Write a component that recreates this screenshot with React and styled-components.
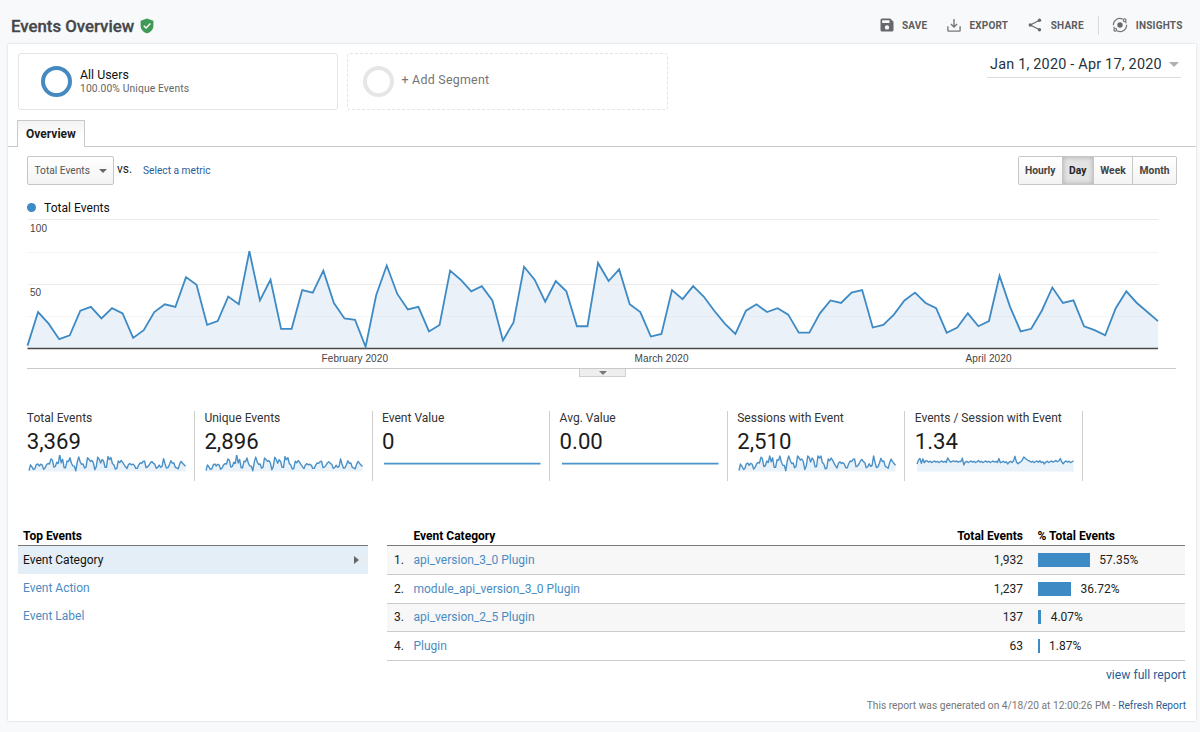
import React from "react";
import styled, { createGlobalStyle } from "styled-components";

const GlobalStyle = createGlobalStyle`
  * { box-sizing: border-box; }
  html, body { margin: 0; padding: 0; background: #f8f9fb; }
  body { font-family: Roboto, "Liberation Sans", sans-serif; font-size: 12px; color: #222; }
`;

const Page = styled.div`
  width: 1200px;
  height: 732px;
  overflow: hidden;
  background: #f8f9fb;
`;

const Header = styled.header`
  height: 44px;
  padding: 6px 17.5px 0 11px;
  display: flex;
  align-items: center;
  justify-content: space-between;
`;

const Title = styled.h1`
  margin: 0;
  display: flex;
  align-items: center;
  gap: 6px;
  font-size: 16.8px;
  line-height: 20px;
  padding-top: 1px;
  font-weight: 500;
  color: #444649;
  -webkit-text-stroke: 0.3px #444649;
`;

const Toolbar = styled.div`
  display: flex;
  align-items: center;
  height: 20px;
`;

const ToolButton = styled.button`
  display: flex;
  align-items: center;
  gap: ${(p) => p.$gap}px;
  margin: 0 0 0 ${(p) => p.$ml}px;
  padding: 0;
  border: 0;
  background: none;
  font: 700 10px Roboto, sans-serif;
  letter-spacing: 0.2px;
  color: #5b5d60;
`;

const ToolDivider = styled.span`
  width: 1px;
  height: 19px;
  margin-left: 14px;
  background: #d9dadc;
`;

const Panel = styled.main`
  width: 1187.5px;
  height: 677px;
  margin-left: 8px;
  background: #fff;
  box-shadow: 0 0 2px rgba(60, 64, 67, 0.22);
`;

const SegmentBar = styled.section`
  display: flex;
  height: 76px;
  padding: 9px 14.5px 0 9.5px;
`;

const SegmentCard = styled.div`
  width: 320.5px;
  height: 57px;
  margin-right: 9px;
  padding-left: ${(p) => (p.$dashed ? 14.5 : 22.5)}px;
  display: flex;
  align-items: center;
  gap: 8px;
  border: 1px ${(p) => (p.$dashed ? "dashed" : "solid")} #e4e4e4;
  border-radius: 3px;
`;

const Ring = styled.span`
  width: 31px;
  height: 31px;
  border-radius: 50%;
  border: 4px solid ${(p) => p.$color};
`;

const SegmentText = styled.div`
  padding-bottom: 1px;
`;

const SegmentName = styled.div`
  font-size: 12.4px;
  line-height: 14px;
  color: #111;
`;

const SegmentDetail = styled.div`
  font-size: 10.3px;
  line-height: 13px;
  letter-spacing: 0.12px;
  color: #666;
`;

const AddSegment = styled.div`
  font-size: 12.4px;
  letter-spacing: 0.26px;
  margin-bottom: 4px;
  color: #757575;
`;

const DateRange = styled.div`
  margin-left: auto;
  width: 194px;
  height: 25px;
  padding: 0 2px 1px 3px;
  display: flex;
  align-items: center;
  justify-content: space-between;
  border-bottom: 1px solid #dcdcdc;
  font-size: 14.4px;
  letter-spacing: 0.22px;
  white-space: nowrap;
  color: #26323c;
`;

const Caret = styled.span`
  border: ${(p) => p.$size}px solid transparent;
  border-top-color: ${(p) => p.$color};
  border-bottom: 0;
`;

const Tabs = styled.nav`
  height: 27px;
  padding-left: 9px;
  border-bottom: 1px solid #c9c9c9;
`;

const Tab = styled.div`
  width: 68px;
  height: 27px;
  border: 1px solid #c9c9c9;
  border-bottom: 0;
  background: linear-gradient(#f3f3f3, #fff 60%);
  font-weight: 700;
  text-align: center;
  line-height: 26px;
  color: #1c1c1c;
`;

const Controls = styled.div`
  display: flex;
  align-items: center;
  height: 29px;
  margin: 9px 18.5px 0 19px;
`;

const MetricSelect = styled.div`
  width: 86.5px;
  height: 29px;
  padding: 0 6px 0 6.5px;
  display: flex;
  align-items: center;
  justify-content: space-between;
  border: 1px solid #c6c6c6;
  border-radius: 2px;
  background: linear-gradient(#fff, #f3f3f3);
  font-size: 10.2px;
  color: #555;
`;

const Versus = styled.span`
  width: 29.5px;
  padding-left: 3.5px;
  padding-bottom: 3px;
  font-size: 12px;
`;

const MetricLink = styled.a`
  font-size: 10.2px;
  color: #2b5e97;
`;

const Granularity = styled.div`
  margin-left: auto;
  display: grid;
  grid-template-columns: 43.5px 31.5px 39px 43px;
  height: 29px;
  border: 1px solid #c6c6c6;
  border-radius: 2px;
  overflow: hidden;
`;

const GrainButton = styled.button`
  padding: 0;
  border: 0;
  border-right: ${(p) => (p.$last ? 0 : 1)}px solid #c6c6c6;
  background: ${(p) => (p.$active ? "#e3e3e3" : "linear-gradient(#fff, #f3f3f3)")};
  box-shadow: ${(p) => (p.$active ? "inset 0 0 5px rgba(0,0,0,.25)" : "none")};
  font: 700 10.3px Roboto, sans-serif;
  color: ${(p) => (p.$active ? "#222" : "#444")};
`;

const Legend = styled.div`
  display: flex;
  align-items: center;
  gap: 8px;
  height: 16px;
  margin: 14.5px 0 0 19px;
  font-size: 12.1px;
  color: #111;
`;

const Dot = styled.span`
  width: 9px;
  height: 9px;
  border-radius: 50%;
  background: #3d8ac4;
`;

const ChartArea = styled.section`
  height: 150px;
  margin: 3.5px 19.5px 0 19px;
  border-bottom: 1px solid #c9c9c9;

  svg { display: block; overflow: visible; }
  text { font-family: "Liberation Sans", Arial, sans-serif; font-size: 10px; fill: #444; }
`;

const Handle = styled.div`
  width: 47px;
  height: 8px;
  margin-left: 571px;
  display: flex;
  align-items: center;
  justify-content: center;
  border: 1px solid #cfcfcf;
  border-top: 0;
  background: #eee;
`;

const Metrics = styled.section`
  display: grid;
  grid-template-columns: repeat(6, 177.6px);
  height: 70px;
  margin: 34px 0 0 9.4px;
`;

const Metric = styled.div`
  padding-left: 9.4px;
  border-right: 1px solid #cfcfcf;
`;

const MetricLabel = styled.div`
  height: 15px;
  line-height: 14px;
  font-size: 12.05px;
  white-space: nowrap;
  color: #333;
`;

const MetricValue = styled.div`
  height: 29px;
  line-height: 31px;
  font-size: 22.2px;
  color: #1c1c1c;
`;

const Spark = styled.svg`
  display: block;
  width: 160px;
  height: 20px;
`;

const Tables = styled.section`
  display: flex;
  gap: 18.5px;
  margin: 44px 10px 0 9.5px;
`;

const Dimensions = styled.div`
  width: 350.5px;
`;

const ListTitle = styled.div`
  height: 21px;
  padding-left: 5.5px;
  border-bottom: 1px solid #777;
  font-weight: 700;
  line-height: 23px;
  color: #000;
`;

const Dimension = styled.div`
  display: flex;
  align-items: center;
  justify-content: space-between;
  height: 28px;
  padding: 0 9px 0 5.5px;
  background: ${(p) => (p.$active ? "#e3eef6" : "transparent")};
  color: ${(p) => (p.$active ? "#111" : "#4a8cc2")};
`;

const RightCaret = styled.span`
  border: 4px solid transparent;
  border-left: 5px solid #666;
  border-right: 0;
`;

const Report = styled.div`
  width: 798.5px;
`;

const ReportRow = styled.div`
  display: grid;
  grid-template-columns: 27px 509.5px 100px 1fr;
  align-items: center;
  height: ${(p) => (p.$head ? 21 : 28.8)}px;
  padding-top: ${(p) => (p.$head ? 2 : 0)}px;
  border-bottom: 1px solid ${(p) => (p.$head ? "#777" : "#cbcbcb")};
  background: ${(p) => (p.$shade ? "#f7f7f7" : "transparent")};
  font-weight: ${(p) => (p.$head ? 700 : 400)};
  color: ${(p) => (p.$head ? "#000" : "#222")};
`;

const RowNumber = styled.span`
  padding-left: 7.5px;
`;

const RowLink = styled.a`
  color: #4a8cc2;
`;

const RowCount = styled.span`
  text-align: right;
`;

const Share = styled.span`
  display: flex;
  align-items: center;
  gap: 9.5px;
  padding-left: 14.5px;
`;

const Bar = styled.span`
  height: 14px;
  background: #3d8ac4;
`;

const Footer = styled.footer`
  padding: 6px 9.5px 0 0;
  text-align: right;
  color: #2b5e97;
`;

const FullReport = styled.div`
  height: 17px;
  line-height: 17px;
  font-size: 12.2px;
`;

const Generated = styled.div`
  margin-top: 14px;
  height: 16px;
  line-height: 16px;
  font-size: 10.23px;
  color: #777;

  a { color: #2b5e97; }
`;

const TOTALS = [
  2, 28, 19, 7, 10, 29, 32, 23, 31, 27, 8, 14, 28, 34, 32, 55, 49, 18, 21, 40, 34, 75, 37, 53, 15, 15, 45, 43,
  60, 35, 23, 22, 1, 41, 64, 42, 30, 32, 13, 18, 60, 53, 44, 48, 37, 6, 20, 63, 53, 36, 52, 44, 17, 17, 66, 52,
  61, 34, 28, 9, 11, 45, 38, 48, 40, 29, 19, 11, 29, 34, 28, 31, 26, 12, 12, 27, 37, 35, 43, 45, 16, 18, 26, 37,
  43, 35, 31, 12, 16, 27, 17, 21, 56, 32, 13, 15, 29, 47, 35, 37, 17, 14, 10, 31, 44, 35, 28, 21,
];

const SESSION_PEAKS = {
  0: 1.1, 1: 1.7, 2: 1.95, 3: 1.2, 4: 1.9, 5: 1.3, 6: 1.6, 21: 2.05, 22: 1.65, 25: 1.6, 30: 1.5, 31: 2.0, 32: 0.95,
  42: 1.65, 56: 1.95, 57: 1.3, 62: 1.1, 66: 1.6, 67: 2.3, 68: 1.4, 69: 1.15, 72: 1.75, 73: 2.2, 74: 2.0, 75: 1.8,
  76: 1.65, 84: 1.6, 87: 1.1, 95: 1.65, 98: 1.95, 99: 1.4, 100: 1.15,
};

const PER_SESSION = TOTALS.map((v, i) => SESSION_PEAKS[i] || 1.32 + ((i * 7) % 5) * 0.065);

const SESSIONS = TOTALS.map((v, i) => Math.min(59, v * (i > 60 ? 1.06 : 0.98)));

const toPoints = (data, width, height, max, pad = 0) =>
  data.map((v, i) => `${((i * width) / (data.length - 1)).toFixed(2)},${(height - pad - (v / max) * (height - pad)).toFixed(2)}`).join(" ");

function Sparkline({ data, max, flat }) {
  if (flat) {
    return (
      <Spark viewBox="0 0 160 20">
        <path d="M2 8.600H158.500" stroke="#4a94cc" strokeWidth="1.700" />
      </Spark>
    );
  }
  const pts = toPoints(data, 156.5, 15.5, max, 0.5);
  return (
    <Spark viewBox="0 0 160 20">
      <g transform="translate(2 1)">
        <polygon points={`0,15.500 ${pts} 156.5,15.5`} fill="#e9f2f9" />
        <polyline points={pts} fill="none" stroke="#4a90c6" strokeWidth="1.400" strokeLinejoin="round" />
      </g>
    </Spark>
  );
}

function EventsChart() {
  const w = 1130.5;
  const h = 129.2;
  const pts = toPoints(TOTALS, w, h, 100);
  return (
    <svg width="1148" height="148">
      <g transform="translate(0.5 0)">
        <polygon points={`0,${h} ${pts} ${w},${h}`} fill="#eaf1f8" />
        <path d="M0 .5H1130.5M0 65.5H1130.5" stroke="#e8eaec" />
        <path d="M0 33.5H1130.5M0 97.500H1130.5" stroke="#dfe3e6" strokeOpacity=".4" />
        <path d="M0 129.5H1130.5" stroke="#4a4a4a" strokeWidth="1.3" />
        <polyline points={pts} fill="none" stroke="#3d8ac4" strokeWidth="1.8" strokeLinejoin="miter" />
      </g>
      <text x="3" y="12.500" textLength="17">100</text>
      <text x="3" y="77">50</text>
      <text x="294.500" y="143" textLength="66.500">February 2020</text>
      <text x="607.500" y="143" textLength="54">March 2020</text>
      <text x="938.500" y="143" textLength="46">April 2020</text>
    </svg>
  );
}

const ShieldIcon = () => (
  <svg width="14" height="16" viewBox="0 0 14 16">
    <path d="M7 .4 13.400 2.800V7.400C13.400 11.200 10.700 14.200 7 15.300 3.300 14.200.6 11.200.6 7.400V2.800Z" fill="#3f9a58" />
    <path d="m3.800 7.700 2.300 2.300 4.300-4.400" fill="none" stroke="#fff" strokeWidth="1.400" />
  </svg>
);

const SaveIcon = () => (
  <svg width="14" height="14" viewBox="0 0 14 14">
    <path fillRule="evenodd" fill="#66686b" d="M2 .5H10.200L13.500 3.800V12A1.500 1.500 0 0 1 12 13.500H2A1.500 1.500 0 0 1 .5 12V2A1.500 1.500 0 0 1 2 .5ZM2.200 2.300V5H9.500V2.300ZM7 7.200A2.200 2.200 0 1 0 7 11.600 2.200 2.200 0 1 0 7 7.200Z" />
  </svg>
);

const ExportIcon = () => (
  <svg width="14" height="14" viewBox="0 0 14 14" fill="none" stroke="#77797c" strokeWidth="1.400">
    <path d="M.9 8.200V12.500Q.9 13.100 1.500 13.100H12.500Q13.100 13.100 13.100 12.500V8.200M7 1V8.800M3.900 6 7 9.100 10.100 6" />
  </svg>
);

const ShareIcon = () => (
  <svg width="14" height="14" viewBox="0 0 14 14" fill="#66686b">
    <path d="M11.500 2.200 2.400 7 11.500 11.800" fill="none" stroke="#66686b" strokeWidth="1.200" />
    <circle cx="11.500" cy="2.200" r="1.700" />
    <circle cx="2.300" cy="7" r="1.700" />
    <circle cx="11.500" cy="11.800" r="1.700" />
  </svg>
);

const InsightsIcon = () => (
  <svg width="16" height="16" viewBox="0 0 16 16" fill="none" stroke="#77797c" strokeWidth="1.200">
    <circle cx="8" cy="8" r="2.700" fill="#66686b" stroke="none" />
    <path d="M1.400 8.300A6.500 6.500 0 0 1 10.800 2.100M14.600 7.700A6.500 6.500 0 0 1 5.200 13.900M14.300 6.200 13.600 4.700M1.700 9.800 2.400 11.300" />
    <circle cx="12.700" cy="3.200" r="1.350" />
    <circle cx="3.300" cy="12.800" r="1.350" />
  </svg>
);

const METRICS = [
  { label: "Total Events", value: "3,369", data: TOTALS, max: 68 },
  { label: "Unique Events", value: "2,896", data: TOTALS, max: 69 },
  { label: "Event Value", value: "0", flat: true },
  { label: "Avg. Value", value: "0.00", flat: true },
  { label: "Sessions with Event", value: "2,510", data: SESSIONS, max: 59 },
  { label: "Events / Session with Event", value: "1.34", data: PER_SESSION, max: 2.35 },
];

const ROWS = [
  { name: "api_version_3_0 Plugin", total: "1,932", pct: 57.35 },
  { name: "module_api_version_3_0 Plugin", total: "1,237", pct: 36.72 },
  { name: "api_version_2_5 Plugin", total: "137", pct: 4.07 },
  { name: "Plugin", total: "63", pct: 1.87 },
];

export default function App() {
  return (
    <Page>
      <GlobalStyle />
      <Header>
        <Title>Events Overview <ShieldIcon /></Title>
        <Toolbar>
          <ToolButton $gap={8} $ml={0}><SaveIcon />SAVE</ToolButton>
          <ToolButton $gap={8} $ml={20}><ExportIcon />EXPORT</ToolButton>
          <ToolButton $gap={8.5} $ml={20}><ShareIcon />SHARE</ToolButton>
          <ToolDivider />
          <ToolButton $gap={8} $ml={13}><InsightsIcon />INSIGHTS</ToolButton>
        </Toolbar>
      </Header>
      <Panel>
        <SegmentBar>
          <SegmentCard>
            <Ring $color="#4489c0" />
            <SegmentText>
              <SegmentName>All Users</SegmentName>
              <SegmentDetail>100.00% Unique Events</SegmentDetail>
            </SegmentText>
          </SegmentCard>
          <SegmentCard $dashed>
            <Ring $color="#e6e6e6" />
            <AddSegment>+ Add Segment</AddSegment>
          </SegmentCard>
          <DateRange>Jan 1, 2020 - Apr 17, 2020 <Caret $size={5.5} $color="#b0b0b0" /></DateRange>
        </SegmentBar>
        <Tabs><Tab>Overview</Tab></Tabs>
        <Controls>
          <MetricSelect>Total Events <Caret $size={4} $color="#666" /></MetricSelect>
          <Versus>vs.</Versus>
          <MetricLink>Select a metric</MetricLink>
          <Granularity>
            <GrainButton>Hourly</GrainButton>
            <GrainButton $active>Day</GrainButton>
            <GrainButton>Week</GrainButton>
            <GrainButton $last>Month</GrainButton>
          </Granularity>
        </Controls>
        <Legend><Dot />Total Events</Legend>
        <ChartArea><EventsChart /></ChartArea>
        <Handle><Caret $size={4} $color="#777" /></Handle>
        <Metrics>
          {METRICS.map((m) => (
            <Metric key={m.label}>
              <MetricLabel>{m.label}</MetricLabel>
              <MetricValue>{m.value}</MetricValue>
              <Sparkline data={m.data} max={m.max} flat={m.flat} />
            </Metric>
          ))}
        </Metrics>
        <Tables>
          <Dimensions>
            <ListTitle>Top Events</ListTitle>
            <Dimension $active>Event Category <RightCaret /></Dimension>
            <Dimension>Event Action</Dimension>
            <Dimension>Event Label</Dimension>
          </Dimensions>
          <Report>
            <ReportRow $head>
              <span />
              <span>Event Category</span>
              <RowCount>Total Events</RowCount>
              <Share>% Total Events</Share>
            </ReportRow>
            {ROWS.map((r, i) => (
              <ReportRow key={r.name} $shade={i % 2 === 0}>
                <RowNumber>{i + 1}.</RowNumber>
                <RowLink>{r.name}</RowLink>
                <RowCount>{r.total}</RowCount>
                <Share>
                  <Bar style={{ width: `${Math.max(2, r.pct * 0.912)}px` }} />
                  {r.pct}%
                </Share>
              </ReportRow>
            ))}
          </Report>
        </Tables>
        <Footer>
          <FullReport>view full report</FullReport>
          <Generated>This report was generated on 4/18/20 at 12:00:26 PM - <a>Refresh Report</a></Generated>
        </Footer>
      </Panel>
    </Page>
  );
}
